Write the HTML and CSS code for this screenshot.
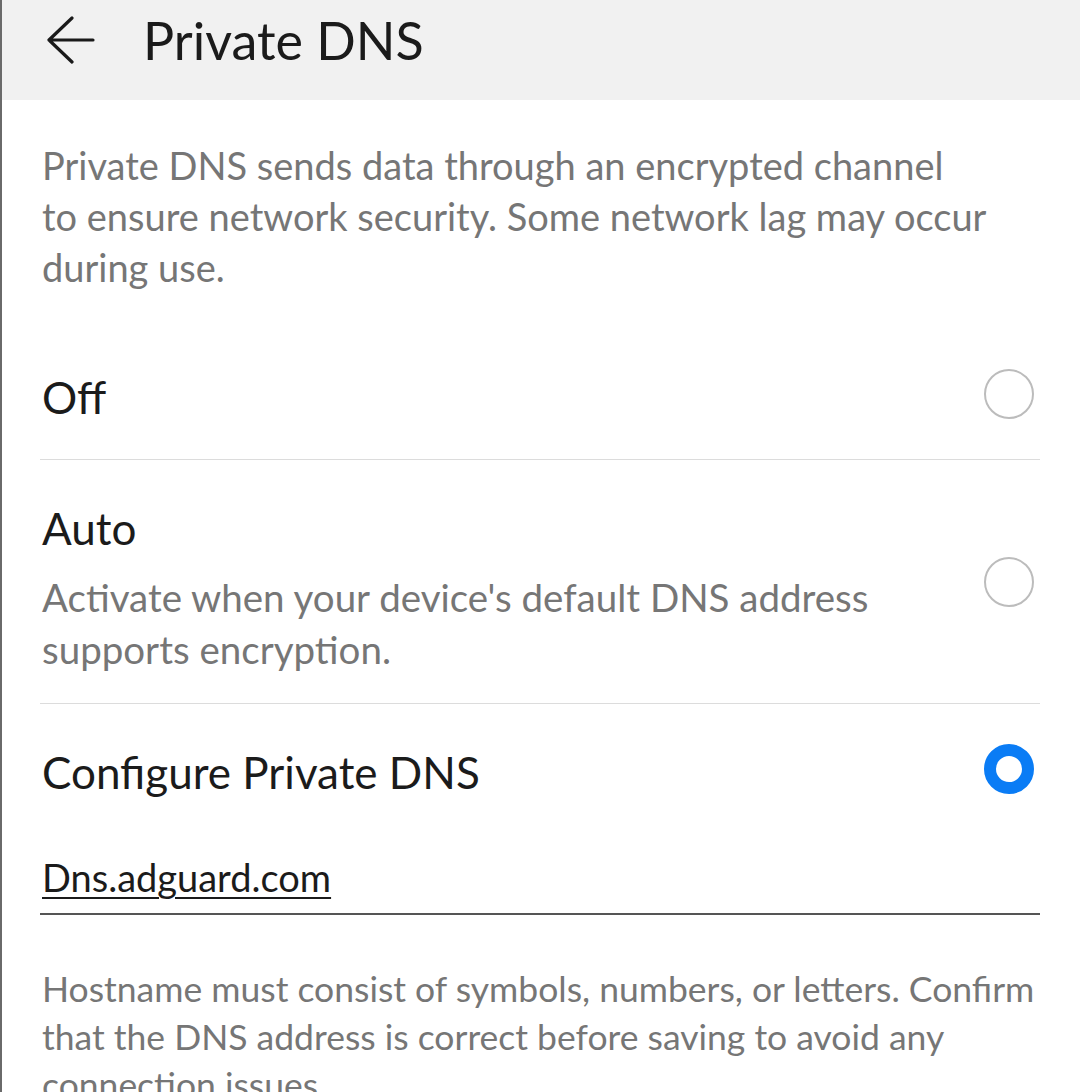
FILE: index.html
```html
<!DOCTYPE html>
<html lang="en">
<head>
    <meta charset="UTF-8">
    <title>Private DNS</title>
    <link rel="stylesheet" href="styles.css">
</head>
<body>
    <div class="screen">
        <div class="header">
            <svg class="back" width="48" height="48" viewBox="0 0 48 48">
                <path d="M2 24 H46 M25 2 L2 24 L25 46" fill="none" stroke="#1a1a1a" stroke-width="3.2" stroke-linecap="round" stroke-linejoin="round"/>
            </svg>
            <h1>Private DNS</h1>
        </div>
        <div class="content">
            <p class="desc">Private DNS sends data through an encrypted channel<br>to ensure network security. Some network lag may occur<br>during use.</p>
            <div class="option off">
                <div class="label">
                    <div class="title">Off</div>
                </div>
                <span class="radio"></span>
            </div>
            <div class="option auto">
                <div class="label">
                    <div class="title">Auto</div>
                    <div class="sub">Activate when your device's default DNS address<br>supports encryption.</div>
                </div>
                <span class="radio"></span>
            </div>
            <div class="option last">
                <div class="label">
                    <div class="title">Configure Private DNS</div>
                </div>
                <span class="radio checked"></span>
            </div>
            <div class="host"><span>Dns.adguard.com</span></div>
            <p class="help">Hostname must consist of symbols, numbers, or letters. Confirm<br>that the DNS address is correct before saving to avoid any<br>connection issues.</p>
        </div>
    </div>
</body>
</html>
```

FILE: styles.css
```css
body {
    margin: 0;
    font-family: Lato, sans-serif;
    background: #fff;
    color: #1b1b1b;
}
.screen {
    border-left: 2px solid #6a6a6a;
    height: 1092px;
    overflow: hidden;
}
.header {
    height: 100px;
    background: #f1f1f1;
    display: flex;
    align-items: center;
    padding-left: 45px;
    padding-bottom: 20px;
    box-sizing: border-box;
}
.back {
    margin-right: 48px;
}
h1 {
    margin: 0;
    font-weight: 400;
    font-size: 52px;
    line-height: 60px;
    color: #1b1b1b;
}
.content {
    padding: 0 40px 0 38px;
}
.desc {
    margin: 40px 0 0;
    padding-left: 2px;
    font-size: 38px;
    line-height: 51px;
    color: #767676;
    white-space: nowrap;
}
.option {
    display: flex;
    align-items: center;
    justify-content: space-between;
    border-bottom: 1px solid #dcdcdc;
}
.label {
    padding-left: 2px;
}
.title {
    font-size: 44px;
    line-height: 56px;
    color: #1b1b1b;
}
.sub {
    margin-top: 15px;
    font-size: 38.5px;
    line-height: 52px;
    color: #767676;
    white-space: nowrap;
}
.radio {
    width: 50px;
    height: 50px;
    border: 2.5px solid #bcbcbc;
    border-radius: 50%;
    margin-right: 6px;
    box-sizing: border-box;
}
.radio.checked {
    border: 12px solid #0a7cf5;
}
.off {
    margin-top: 42px;
    height: 124px;
}
.off .radio {
    margin-bottom: 6px;
}
.auto {
    padding: 40px 0 28px;
}
.auto .radio {
    margin-bottom: 12px;
}
.last {
    border-bottom: none;
    padding-top: 40px;
}
.last .radio {
    margin-bottom: 6px;
}
.host {
    margin-top: 51px;
    padding-left: 2px;
    border-bottom: 2px solid #555;
    padding-bottom: 10px;
    font-size: 38px;
    line-height: 52px;
}
.host span {
    text-decoration: underline;
    text-decoration-thickness: 2px;
    text-underline-offset: 5px;
}
.help {
    margin: 50px 0 0;
    padding-left: 2px;
    font-size: 35.5px;
    line-height: 48px;
    color: #767676;
    white-space: nowrap;
}
```
